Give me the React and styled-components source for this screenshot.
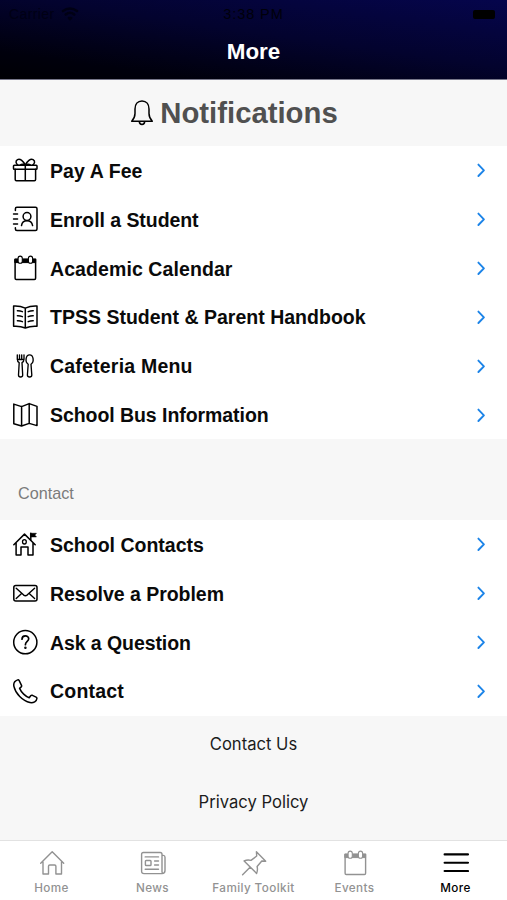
import React from 'react';
import { styled, createGlobalStyle } from 'styled-components';

const GlobalStyle = createGlobalStyle`
  *, *::before, *::after {
    box-sizing: border-box;
  }
  body {
    margin: 0;
    background: #f7f7f7;
    font-family: 'Liberation Sans', Arial, sans-serif;
  }
`;

const Screen = styled.div`
  display: flex;
  flex-direction: column;
  width: 507px;
  height: 900px;
  overflow: hidden;
  background: #f7f7f7;
`;

const Header = styled.header`
  flex: none;
  height: 79.5px;
  border-bottom: 1px solid #77778a;
  background: linear-gradient(188deg, #05054c 0%, #03032e 45%, #00000c 82%, #000004 100%);
`;

const StatusBar = styled.div`
  display: grid;
  grid-template-columns: 1fr auto 1fr;
  align-items: center;
  height: 28px;
  padding: 0 12px 0 9px;
  font-size: 14px;
  color: #000014;
`;

const Carrier = styled.div`
  display: flex;
  align-items: center;
  gap: 6px;
  letter-spacing: 0.4px;
`;

const Clock = styled.span`
  padding-left: 3px;
  font-size: 14.5px;
  letter-spacing: 0.9px;
  color: #00000a;
`;

const Battery = styled.span`
  justify-self: end;
  width: 22px;
  height: 9px;
  border-radius: 2px;
  background: #000;
`;

const Title = styled.h1`
  margin: 0;
  font-size: 22.4px;
  line-height: 48px;
  text-align: center;
  color: #fff;
`;

const Notifications = styled.div`
  display: flex;
  flex: none;
  justify-content: center;
  align-items: center;
  gap: 5.5px;
  height: 66.5px;
  padding-right: 40.5px;
`;

const NotificationsText = styled.span`
  font-size: 29.3px;
  font-weight: bold;
  line-height: 34px;
  color: #505050;
`;

const List = styled.div`
  flex: none;
  background: #fff;
`;

const Row = styled.div`
  display: flex;
  align-items: center;
  height: 48.9px;
  padding: 0 21.5px 0 12px;
`;

const RowText = styled.span`
  flex: 1;
  margin-left: 12px;
  padding-top: 0.6px;
  font-size: 19.5px;
  font-weight: bold;
  letter-spacing: ${(props) => props.$tracking || 0}px;
  line-height: 24px;
  white-space: nowrap;
  color: #0a0a0a;
`;

const SectionTitle = styled.div`
  flex: none;
  height: 80.7px;
  padding: 43.8px 18px 0;
  font-size: 16.2px;
  line-height: 20px;
  color: #7b7b7b;
`;

const Links = styled.div`
  display: flex;
  flex: 1;
  flex-direction: column;
  align-items: center;
  padding-top: 0.8px;
`;

const FooterLink = styled.span`
  height: 57.5px;
  font-family: Inter, sans-serif;
  font-size: 16.6px;
  line-height: 57px;
  color: #1c1c1c;
`;

const TabBar = styled.nav`
  display: grid;
  flex: none;
  grid-template-columns: repeat(5, 101px);
  justify-content: center;
  height: 60.5px;
  border-top: 1.5px solid #e2e2e2;
  background: #fff;
`;

const Tab = styled.div`
  display: flex;
  flex-direction: column;
  align-items: center;
  padding-top: 9.6px;
  font-family: Inter, sans-serif;
  font-size: 11.7px;
  font-weight: 500;
  letter-spacing: 0.4px;
  line-height: 25px;
  white-space: nowrap;
  color: ${(props) => (props.$active ? '#000' : '#929292')};
`;

const Glyph = styled.svg`
  display: block;
  flex: none;
  width: ${(props) => props.$size || 26}px;
  height: ${(props) => props.$size || 26}px;
  fill: none;
  stroke: currentColor;
  stroke-width: ${(props) => props.$weight || 1.5};
  stroke-linecap: round;
  stroke-linejoin: round;
`;

const Chevron = styled(Glyph)`
  width: 10px;
  height: 16px;
  stroke: #1c84e8;
  stroke-width: 1.9;
`;

const icons = {
  gift: (
    <>
      <rect x="1.5" y="8.3" width="23.5" height="4" rx="0.8" />
      <path d="M3.2 12.3V22.5q0 1.2 1.2 1.2H22.4q1.2 0 1.2-1.2V12.3M13.3 8.3V23.7" />
      <path d="M13.3 8.1C11.5 4 8 1.2 5.5 2.6C3 4 4 7 6 8.2M13.3 8.1C15.1 4 18.6 1.2 21.1 2.6C23.6 4 22.6 7 20.6 8.2M13.3 8.1C11.5 7.2 9.5 7 8.2 8.1M13.3 8.1C15.1 7.2 17.1 7 18.4 8.1" />
    </>
  ),
  card: (
    <>
      <path d="M3.4 4.5V2.7Q3.4 1.2 4.9 1.2H23.5Q25 1.2 25 2.7V23Q25 24.5 23.5 24.5H4.9Q3.4 24.5 3.4 23V21.8" />
      <path d="M1.5 8H5.6M1.5 13H5.6M1.5 18H5.6" strokeWidth="1.4" />
      <circle cx="15" cy="10.5" r="3.9" />
      <path d="M9.5 19.6C10 16.5 12 14.8 15 14.8S20 16.5 20.6 19.6" />
    </>
  ),
  calendar: (
    <>
      <path d="M3.1 4.3H23.6V23.3Q23.6 24.5 22.4 24.5H4.3Q3.1 24.5 3.1 23.3Z" />
      <path d="M3.1 4.3H23.6V7.6H3.1Z" fill="currentColor" strokeWidth="1" />
      <rect x="6.1" y="1.1" width="4.2" height="7.2" rx="2.1" fill="#fff" strokeWidth="1.1" />
      <rect x="16.4" y="1.1" width="4.2" height="7.2" rx="2.1" fill="#fff" strokeWidth="1.1" />
    </>
  ),
  book: (
    <>
      <path d="M13.3 4.2Q8 1.6 1.6 2V22.3Q8 21.8 13.3 24Q18.6 21.8 25 22.3V2Q18.6 1.6 13.3 4.2ZM13.3 4.2V24" />
      <path d="M5.4 6.7Q8 6.6 10.4 7.6M5.4 11.7Q8 11.6 10.4 12.6M5.4 16.7Q8 16.6 10.4 17.6M21.2 6.7Q18.6 6.6 16.2 7.6M21.2 11.7Q18.6 11.6 16.2 12.6M21.2 16.7Q18.6 16.6 16.2 17.6" />
    </>
  ),
  cutlery: (
    <g strokeWidth="1.35">
      <path d="M5.3 1.8V6.2Q5.3 8.7 7.2 9.6L6.5 22Q6.5 24 8.6 24T10.7 22L10 9.6Q12 8.7 12 6.2V1.8M7.5 1.8V6.5M9.7 1.8V6.5M5.3 6.5H12" />
      <path d="M16.2 11.2C12.6 8.8 13.8 1.8 17.6 1.8S22.6 8.8 19 11.2L19.8 22Q19.8 24 17.6 24T15.4 22Z" />
    </g>
  ),
  map: (
    <path d="M1.8 2.1L9.6 4.6L17.2 1.6L25 4.4V23.6L17.2 21.4L9.6 24L1.8 21.8ZM9.6 4.6V24M17.2 1.6V21.4" />
  ),
  school: (
    <>
      <path d="M1.8 13.8L12.5 3.1L23.2 13.8M4.1 12V23.9H9V16H16V23.9H21V12" />
      <ellipse cx="12.4" cy="10.8" rx="1.9" ry="2.2" strokeWidth="1.3" />
      <path d="M18.8 8.9V2.2" />
      <path d="M18.8 2.3H24.4L22.8 4.1L24.4 5.9H18.8Z" fill="currentColor" strokeWidth="0.6" />
    </>
  ),
  mail: (
    <>
      <rect x="1.8" y="5.6" width="23.2" height="15.4" rx="2" />
      <path d="M4.2 8.2L11.7 15.1Q13.4 16.4 15.1 15.1L22.6 8.2M4.2 18.6L9.6 13.6M22.6 18.6L17.2 13.6" strokeWidth="1.4" />
    </>
  ),
  question: (
    <>
      <circle cx="13.3" cy="13.2" r="11.6" />
      <path d="M10 10.2C10 5.8 16.7 5.8 16.7 9.8C16.7 12.4 13.4 12.5 13.4 15.7" strokeWidth="1.7" />
      <circle cx="13.4" cy="18.7" r="0.5" fill="currentColor" />
    </>
  ),
  phone: (
    <path d="M5.7 1.9C3 2.8 1.2 5.4 2 8.7C3.4 15.4 10.5 23 18 24.6C21.5 25.3 24.7 23.2 24.9 20.5Q25 19.6 24.1 19.1L20.4 17.3Q19.4 16.9 18.7 17.7L17.2 19.7C13.7 18.6 9.2 14.3 7.6 10.4L9.2 8.9Q9.9 8.2 9.5 7.3L7.2 2.6Q6.6 1.6 5.7 1.9Z" />
  ),
  home: (
    <path d="M1.7 13.3L13.2 1.8L24.7 13.3M4 11.7V24H9.5V16.3Q9.5 15 10.8 15H15.6Q16.9 15 16.9 16.3V24H22.5V11.7" />
  ),
  news: (
    <>
      <path d="M22 5.4H23.3Q25 5.4 25 7.2V20.5Q25 23.6 22 23.6H4Q1.6 23.6 1.6 21.2V4.3Q1.6 2.5 3.4 2.5H20.2Q22 2.5 22 4.3V21.7Q22 23.2 23.1 23.4" />
      <path d="M5.2 6.9H18.5M14.6 11H18.5M14.6 15H18.5M5.2 19.3H18.5" />
      <rect x="5.4" y="10.5" width="5.6" height="5" rx="0.8" />
    </>
  ),
  pin: (
    <path d="M15.4 1.8L15.7 6L10 10.4Q6.4 9.5 3.1 10.9L15.6 23.4Q17 20 16.1 16.5L20.8 11L24.7 11.3ZM9.3 17.1L1.6 24.8" />
  ),
  menu: <path d="M1.6 4.4H25M1.6 12.7H25M1.6 21H25" strokeWidth="2.1" />
};

const Icon = ({ name, weight }) => (
  <Glyph viewBox="0 0 26 26" $weight={weight}>
    {icons[name]}
  </Glyph>
);

const mainItems = [
  { icon: 'gift', label: 'Pay A Fee', tracking: 0.08 },
  { icon: 'card', label: 'Enroll a Student', tracking: -0.06 },
  { icon: 'calendar', label: 'Academic Calendar', tracking: 0.09 },
  { icon: 'book', label: 'TPSS Student & Parent Handbook', tracking: 0.01 },
  { icon: 'cutlery', label: 'Cafeteria Menu', tracking: 0.21 },
  { icon: 'map', label: 'School Bus Information', tracking: -0.06 }
];

const contactItems = [
  { icon: 'school', label: 'School Contacts' },
  { icon: 'mail', label: 'Resolve a Problem', tracking: -0.03 },
  { icon: 'question', label: 'Ask a Question', tracking: -0.08 },
  { icon: 'phone', label: 'Contact', tracking: 0.2 }
];

const tabs = [
  { icon: 'home', label: 'Home' },
  { icon: 'news', label: 'News' },
  { icon: 'pin', label: 'Family Toolkit' },
  { icon: 'calendar', label: 'Events' },
  { icon: 'menu', label: 'More', active: true }
];

const MenuList = ({ items }) => (
  <List>
    {items.map((item) => (
      <Row key={item.label}>
        <Icon name={item.icon} />
        <RowText $tracking={item.tracking}>{item.label}</RowText>
        <Chevron viewBox="0 0 10 16">
          <path d="M2.4 2.6L7.9 8.3L2.4 14" />
        </Chevron>
      </Row>
    ))}
  </List>
);

const App = () => {
  return (
    <>
      <GlobalStyle />
      <Screen>
        <Header>
          <StatusBar>
            <Carrier>
              Carrier
              <Glyph viewBox="0 0 18 14" $size={18} $weight={2.6}>
                <path d="M2 4Q9 -1 16 4M4.8 7.5Q9 4 13.2 7.5M8 11L9 12L10 11Z" />
              </Glyph>
            </Carrier>
            <Clock>3:38 PM</Clock>
            <Battery />
          </StatusBar>
          <Title>More</Title>
        </Header>
        <Notifications>
          <Glyph viewBox="0 0 26 26">
            <path d="M13 1C8.5 1 6 4.5 6 9V13.5C6 17 4.8 19 2.7 21.2H23.3C21.2 19 20 17 20 13.5V9C20 4.5 17.5 1 13 1ZM10.3 21.4C10.5 25.4 15.5 25.4 15.7 21.4" />
          </Glyph>
          <NotificationsText>Notifications</NotificationsText>
        </Notifications>
        <MenuList items={mainItems} />
        <SectionTitle>Contact</SectionTitle>
        <MenuList items={contactItems} />
        <Links>
          <FooterLink>Contact Us</FooterLink>
          <FooterLink>Privacy Policy</FooterLink>
        </Links>
        <TabBar>
          {tabs.map((tab) => (
            <Tab key={tab.label} $active={tab.active}>
              <Icon name={tab.icon} weight={1.4} />
              <span>{tab.label}</span>
            </Tab>
          ))}
        </TabBar>
      </Screen>
    </>
  );
};

export default App;
